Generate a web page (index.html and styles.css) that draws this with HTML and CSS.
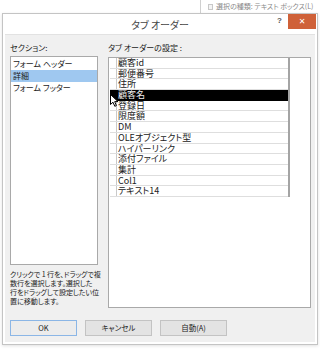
FILE: index.html
```html
<!DOCTYPE html>
<html lang="ja">
<head>
<meta charset="utf-8">
<title>タブ オーダー</title>
<link rel="stylesheet" href="styles.css">
</head>
<body>
<div class="top">
  <span class="top-box"></span>
  <span class="top-text">選択の種類: テキスト ボックス(L)</span>
</div>
<div class="dialog">
  <div class="titlebar">
    <span></span>
    <div class="title">タブ オーダー</div>
    <div class="tb-right"><span class="help">?</span><span class="close">✕</span></div>
  </div>
  <div class="body">
    <div class="cols">
      <div class="col-left">
        <div class="label">セクション:</div>
        <div class="listbox sections">
          <div class="item">フォーム ヘッダー</div>
          <div class="item sel">詳細</div>
          <div class="item">フォーム フッター</div>
        </div>
        <p class="help-text">クリックで 1 行を、ドラッグで複<br>数行を選択します。選択した<br>行をドラッグして設定したい位<br>置に移動します。</p>
      </div>
      <div class="col-right">
        <div class="label">タブ オーダーの設定 :</div>
        <div class="listbox order">
          <div class="grid">
            <div class="row"><span class="selc"></span><span class="cell">顧客id</span></div>
            <div class="row"><span class="selc"></span><span class="cell">郵便番号</span></div>
            <div class="row"><span class="selc"></span><span class="cell">住所</span></div>
            <div class="row active"><span class="selc"></span><span class="cell">顧客名</span></div>
            <div class="row"><span class="selc"></span><span class="cell">登録日</span></div>
            <div class="row"><span class="selc"></span><span class="cell">限度額</span></div>
            <div class="row"><span class="selc"></span><span class="cell">DM</span></div>
            <div class="row"><span class="selc"></span><span class="cell">OLEオブジェクト型</span></div>
            <div class="row"><span class="selc"></span><span class="cell">ハイパーリンク</span></div>
            <div class="row"><span class="selc"></span><span class="cell">添付ファイル</span></div>
            <div class="row"><span class="selc"></span><span class="cell">集計</span></div>
            <div class="row"><span class="selc"></span><span class="cell">Col1</span></div>
            <div class="row"><span class="selc"></span><span class="cell">テキスト14</span></div>
          </div>
          <svg class="cursor" width="9" height="13" viewBox="0 0 9 13"><path d="M0.5 0.5 L0.5 10.5 L3 8.2 L4.8 12.3 L6.4 11.6 L4.7 7.6 L8 7.6 Z" fill="#fff" stroke="#000" stroke-width="1"/></svg>
        </div>
      </div>
    </div>
    <div class="buttons">
      <button class="btn default">OK</button>
      <button class="btn">キャンセル</button>
      <button class="btn">自動(A)</button>
    </div>
  </div>
</div>
</body>
</html>
```
FILE: styles.css
```css
* { box-sizing: border-box; }
html, body {
  margin: 0;
  padding: 0;
  width: 320px;
  height: 360px;
  overflow: hidden;
  background: #fff;
  font-family: "Noto Sans CJK JP", "Noto Sans", sans-serif;
  font-feature-settings: "palt";
  color: #1a1a1a;
}
.top {
  height: 13px;
  margin-left: 200px;
  border-left: 1px solid #d0d0d0;
  display: flex;
  align-items: center;
  padding-left: 7px;
  gap: 3px;
}
.top-box {
  width: 5px;
  height: 6px;
  border: 1px solid #c8c8c8;
  background: #f4f4f4;
}
.top-text {
  font-size: 7px;
  line-height: 9px;
  color: #8a8a8a;
  white-space: nowrap;
}
.dialog {
  margin: 0 2px;
  width: 316px;
  height: 332px;
  border: 1px solid #c4c4c4;
  background: #fff;
  box-shadow: 0 1px 3px rgba(0,0,0,0.12);
}
.titlebar {
  height: 20px;
  display: grid;
  grid-template-columns: 1fr auto 1fr;
  align-items: start;
}
.title {
  font-size: 10px;
  line-height: 20px;
  color: #444;
  padding-top: 1px;
}
.tb-right {
  display: flex;
  justify-content: flex-end;
  align-items: flex-start;
  gap: 6px;
  padding-right: 1px;
}
.help {
  font-family: "Liberation Sans", sans-serif;
  font-weight: bold;
  font-size: 8px;
  line-height: 14px;
  color: #555;
}
.close {
  width: 28px;
  height: 15px;
  background: #cf6139;
  color: #fff;
  font-size: 8px;
  line-height: 15px;
  text-align: center;
  font-family: "DejaVu Sans", sans-serif;
  font-weight: bold;
}
.body {
  margin: 0 2px 2px;
  height: 308px;
  background: #f0f0f0;
  border-top: 1px solid #e2e2e2;
  padding: 7px 4px 0 5px;
}
.cols {
  display: grid;
  grid-template-columns: 88px 203px;
  column-gap: 10px;
}
.label {
  font-size: 8px;
  line-height: 12px;
  height: 12px;
  white-space: nowrap;
}
.listbox {
  background: #fff;
  border: 1px solid #a9a9a9;
}
.sections {
  margin-top: 2px;
  height: 209px;
  padding: 1px 0;
}
.item {
  font-size: 8px;
  line-height: 12px;
  height: 12px;
  padding-left: 2px;
  white-space: nowrap;
}
.item.sel {
  background: #9fc8f0;
}
.help-text {
  margin: 5px 0 0;
  font-size: 7.1px;
  line-height: 9px;
  white-space: nowrap;
  letter-spacing: -0.1px;
  color: #222;
}
.order {
  margin-top: 3px;
  height: 251px;
  position: relative;
  padding: 0 0 0 1px;
}
.grid {
  width: 180px;
  border-right: 2px solid #a4a4a4;
}
.row {
  display: grid;
  grid-template-columns: 7px 1fr;
  height: 10.7px;
  border-bottom: 1px solid #dedede;
}
.selc {
  border-right: 1px solid #c9c9c9;
}
.cell {
  font-size: 9px;
  line-height: 9.7px;
  height: 9.7px;
  padding-left: 1px;
  white-space: nowrap;
  color: #222;
}
.row.active {
  background: #000;
  border-bottom-color: #000;
}
.row.active .selc { border-right-color: #000; }
.row.active .cell { color: #eee; }
.cursor {
  position: absolute;
  left: 1px;
  top: 36px;
}
.buttons {
  margin-top: 12px;
  display: flex;
  gap: 8px;
}
.btn {
  width: 67px;
  height: 16px;
  padding: 0;
  font-family: "Noto Sans CJK JP", "Noto Sans", sans-serif;
  font-feature-settings: "palt";
  font-size: 7.5px;
  line-height: 14px;
  color: #222;
  background: #e3e3e3;
  border: 1px solid #c3c3c3;
}
.btn.default {
  background: #ececec;
  border-color: #8bb6e6;
}
```
